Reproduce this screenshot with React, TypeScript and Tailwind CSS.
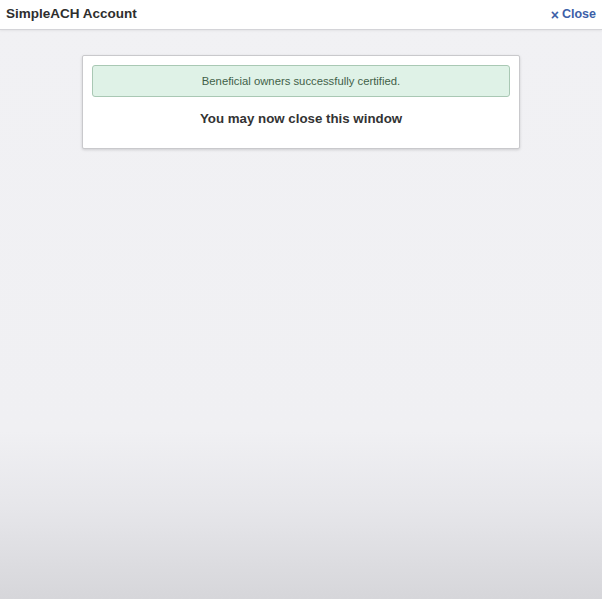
export default function App() {
  return (
    <div className="flex h-[599px] w-[602px] flex-col overflow-hidden bg-[linear-gradient(to_bottom,#f1f1f4_0%,#f0f0f3_72%,#e6e6ea_85%,#d6d6da_100%)] font-['Liberation_Sans',Arial,sans-serif]">
      <header className="flex h-[30px] items-center justify-between border-b border-[#d4d4d8] bg-white pl-[6px] pr-[6px] shadow-[0_1px_2px_rgba(0,0,0,0.06)]">
        <h1 className="text-[13.5px] font-bold text-[#2e2e2e]">SimpleACH Account</h1>
        <button className="flex items-center gap-[3px] text-[12.5px] font-bold text-[#3d5fa8]">
          <span className="text-[14px] font-black leading-none">×</span>
          <span>Close</span>
        </button>
      </header>

      <main className="flex justify-center pt-[25px]">
        <div className="w-[438px] rounded-[2px] border border-[#c9c9cc] bg-white px-[9px] pb-[19px] pt-[9px] shadow-[0_1px_3px_rgba(0,0,0,0.15)]">
          <div className="flex h-[32px] items-center justify-center rounded-[3px] border border-[#a9c8b4] bg-[#dff2e7] text-[11.3px] text-[#3f6149]">
            Beneficial owners successfully certified.
          </div>
          <p className="mt-[12px] text-center text-[13.3px] font-bold text-[#333]">
            You may now close this window
          </p>
        </div>
      </main>
    </div>
  );
}
